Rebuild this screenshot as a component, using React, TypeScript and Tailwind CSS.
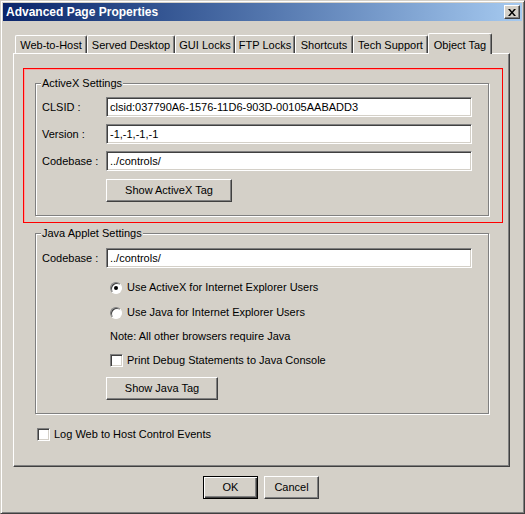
import React from 'react';

const font = { fontFamily: '"Liberation Sans", Arial, sans-serif' };

const tabs = [
  { label: 'Web-to-Host', w: 'w-[72px]' },
  { label: 'Served Desktop', w: 'w-[88px]' },
  { label: 'GUI Locks', w: 'w-[60px]' },
  { label: 'FTP Locks', w: 'w-[60px]' },
  { label: 'Shortcuts', w: 'w-[58px]' },
  { label: 'Tech Support', w: 'w-[75px]' },
];

function TextBox({ value }: { value: string }) {
  return (
    <div className="w-[366px] h-[20px] bg-white border border-t-[#808080] border-l-[#808080] border-b-white border-r-white shadow-[inset_1px_1px_0_#404040,inset_-1px_-1px_0_#d4d0c8] flex items-center pl-[3px] text-[11px] leading-none">
      {value}
    </div>
  );
}

function Button({ label, w, isDefault }: { label: string; w: string; isDefault?: boolean }) {
  return (
    <div
      className={`${w} h-[23px] flex items-center justify-center text-[11px] border ${
        isDefault
          ? 'border-black shadow-[inset_1px_1px_0_#fff,inset_-1px_-1px_0_#404040,inset_-2px_-2px_0_#808080]'
          : 'border-t-white border-l-white border-r-[#404040] border-b-[#404040] shadow-[inset_-1px_-1px_0_#808080]'
      }`}
    >
      {label}
    </div>
  );
}

function Group({ title, h, children }: { title: string; h: string; children: React.ReactNode }) {
  return (
    <div className={`relative w-[454px] ${h} border border-[#808080] shadow-[inset_1px_1px_0_#fff,1px_1px_0_#fff]`}>
      <span className="absolute -top-[7px] left-[5px] px-[1px] bg-[#d4d0c8] text-[11px] leading-[13px]">{title}</span>
      {children}
    </div>
  );
}

function Row({ label, value, mt }: { label: string; value: string; mt: string }) {
  return (
    <div className={`flex items-center ${mt}`}>
      <span className="w-[70px] pl-[6px] text-[11px]">{label}</span>
      <TextBox value={value} />
    </div>
  );
}

function Radio({ checked }: { checked?: boolean }) {
  return (
    <div className="w-[12px] h-[12px] rounded-full bg-white border border-t-[#808080] border-l-[#808080] border-b-white border-r-white shadow-[inset_1px_1px_0_#404040] flex items-center justify-center">
      {checked && <div className="w-[4px] h-[4px] rounded-full bg-black" />}
    </div>
  );
}

function CheckBox() {
  return (
    <div className="w-[13px] h-[13px] bg-white border border-t-[#808080] border-l-[#808080] border-b-white border-r-white shadow-[inset_1px_1px_0_#404040,inset_-1px_-1px_0_#d4d0c8]" />
  );
}

export default function App() {
  return (
    <div
      style={font}
      className="w-[525px] h-[514px] bg-[#d4d0c8] text-black border border-t-[#d4d0c8] border-l-[#d4d0c8] border-r-[#404040] border-b-[#404040] shadow-[inset_1px_1px_0_#fff,inset_-1px_-1px_0_#808080] p-[2px]"
    >
      {/* Title bar */}
      <div className="h-[18px] flex items-center justify-between bg-gradient-to-r from-[#0a246a] to-[#a6caf0] pl-[3px] pr-[2px]">
        <span className="text-white font-bold text-[12px] leading-none">Advanced Page Properties</span>
        <div className="w-[16px] h-[14px] bg-[#d4d0c8] border border-t-white border-l-white border-r-[#404040] border-b-[#404040] shadow-[inset_-1px_-1px_0_#808080] flex items-center justify-center">
          <svg width="8" height="7" viewBox="0 0 8 7">
            <path d="M0 0h2l2 2.5L6 0h2L5 3.5 8 7H6L4 4.5 2 7H0l3-3.5z" fill="#000" />
          </svg>
        </div>
      </div>

      <div className="ml-[10px] mt-[12px]">
        {/* Tabs */}
        <div className="flex items-end h-[20px] pl-[2px] relative z-10">
          {tabs.map((t) => (
            <div
              key={t.label}
              className={`${t.w} h-[18px] border-l border-t border-r border-l-white border-t-white border-r-[#404040] rounded-t-[2px] shadow-[inset_-1px_0_0_#808080] flex items-center justify-center text-[11px] pt-[1px]`}
            >
              {t.label}
            </div>
          ))}
          <div className="w-[64px] h-[21px] -mb-[1px] bg-[#d4d0c8] border-l border-t border-r border-l-white border-t-white border-r-[#404040] rounded-t-[2px] shadow-[inset_-1px_0_0_#808080] flex items-start justify-center pt-[3px] text-[11px]">
            Object Tag
          </div>
        </div>

        {/* Panel */}
        <div className="w-[497px] h-[414px] border border-t-white border-l-white border-r-[#404040] border-b-[#404040] shadow-[inset_-1px_-1px_0_#808080] pl-[9px] pt-[14px]">
          <div className="w-[480px] h-[155px] border border-[#ff0000] shadow-[inset_1px_1px_0_#f8a0a0] pl-[11px] pt-[14px]">
            <Group title="ActiveX Settings" h="h-[133px]">
              <div className="pt-[13px]">
                <Row label="CLSID :" value="clsid:037790A6-1576-11D6-903D-00105AABADD3" mt="" />
                <Row label="Version :" value="-1,-1,-1,-1" mt="mt-[7px]" />
                <Row label="Codebase :" value="../controls/" mt="mt-[7px]" />
                <div className="ml-[70px] mt-[8px]">
                  <Button label="Show ActiveX Tag" w="w-[126px]" />
                </div>
              </div>
            </Group>
          </div>

          <div className="ml-[12px] mt-[10px]">
            <Group title="Java Applet Settings" h="h-[181px]">
              <div className="pt-[14px]">
                <Row label="Codebase :" value="../controls/" mt="" />
                <div className="ml-[74px]">
                  <div className="flex items-center gap-[5px] mt-[13px] h-[13px] text-[11px]">
                    <Radio checked />
                    <span>Use ActiveX for Internet Explorer Users</span>
                  </div>
                  <div className="flex items-center gap-[5px] mt-[12px] h-[13px] text-[11px]">
                    <Radio />
                    <span>Use Java for Internet Explorer Users</span>
                  </div>
                  <div className="mt-[11px] h-[13px] flex items-center text-[11px]">
                    Note: All other browsers require Java
                  </div>
                  <div className="flex items-center gap-[4px] mt-[11px] h-[13px] text-[11px]">
                    <CheckBox />
                    <span>Print Debug Statements to Java Console</span>
                  </div>
                </div>
                <div className="ml-[70px] mt-[10px]">
                  <Button label="Show Java Tag" w="w-[112px]" />
                </div>
              </div>
            </Group>
          </div>

          <div className="flex items-center gap-[4px] ml-[14px] mt-[12px] text-[11px]">
            <CheckBox />
            <span>Log Web to Host Control Events</span>
          </div>
        </div>
      </div>

      {/* Dialog buttons */}
      <div className="flex gap-[6px] mt-[9px] pl-[200px]">
        <Button label="OK" w="w-[55px]" isDefault />
        <Button label="Cancel" w="w-[55px]" />
      </div>
    </div>
  );
}
